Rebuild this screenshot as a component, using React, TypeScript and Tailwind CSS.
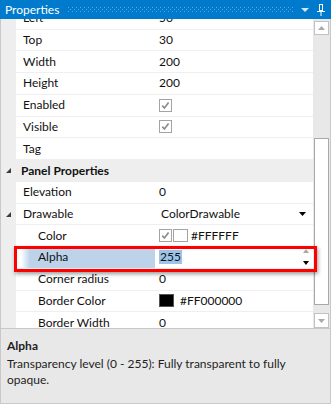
import React from 'react';
import clsx from 'clsx';

function Expander() {
  return (
    <svg width="5" height="5" viewBox="0 0 5 5">
      <polygon points="5,0 5,5 0,5" fill="#3c3c3c" />
    </svg>
  );
}

function CheckBox() {
  return (
    <span className="flex h-[13px] w-[13px] items-center justify-center border border-[#a3a3a3] bg-white">
      <svg width="9" height="9" viewBox="0 0 9 9">
        <path d="M1.3 4.6 L3.4 7 L7.6 1.4" fill="none" stroke="#8c8c8c" strokeWidth="1.7" />
      </svg>
    </span>
  );
}

function DownTri({ color = '#000', w = 7, h = 4 }: { color?: string; w?: number; h?: number }) {
  return (
    <svg width={w} height={h} viewBox={`0 0 ${w} ${h}`}>
      <polygon points={`0,0 ${w},0 ${w / 2},${h}`} fill={color} />
    </svg>
  );
}

function UpTri({ color = '#000', w = 7, h = 4 }: { color?: string; w?: number; h?: number }) {
  return (
    <svg width={w} height={h} viewBox={`0 0 ${w} ${h}`}>
      <polygon points={`0,${h} ${w},${h} ${w / 2},0`} fill={color} />
    </svg>
  );
}

interface RowProps {
  name: string;
  nested?: boolean;
  expand?: boolean;
  selected?: boolean;
  children?: React.ReactNode;
}

function Row({ name, nested, expand, selected, children }: RowProps) {
  return (
    <div className="flex h-[21.75px] shrink-0">
      <div className="flex w-[15px] items-center justify-center bg-[#eeeeee]">{expand && <Expander />}</div>
      <div className="flex flex-1 border-b border-[#efefef]">
        <div
          className={clsx(
            'flex h-full w-[139px] items-center',
            nested ? 'pl-[22px]' : 'pl-[7px]',
            selected && 'bg-[linear-gradient(to_right,#ffffff_5px,#bcd3ea_14px)]'
          )}
        >
          {name}
        </div>
        <div className="flex h-full flex-1 items-center pl-[4px]">{children}</div>
      </div>
    </div>
  );
}

function Header({ name }: { name: string }) {
  return (
    <div className="flex h-[21.75px] shrink-0 items-center bg-[#eeeeee]">
      <div className="flex w-[15px] items-center justify-center">
        <Expander />
      </div>
      <span className="pl-[5px] font-bold">{name}</span>
    </div>
  );
}

export default function App() {
  return (
    <div className="relative flex h-[404px] w-[331px] flex-col overflow-hidden bg-white font-['Lato',sans-serif] text-[12px] text-[#111]">
      {/* title bar */}
      <div className="flex h-[19px] shrink-0 items-center bg-[#007acc] pl-[5px] pr-[6px] text-white">
        <span className="leading-none">Properties</span>
        <svg className="ml-[9px] h-[5px] flex-1" height="5">
          <defs>
            <pattern id="dots" width="4" height="4" patternUnits="userSpaceOnUse">
              <rect x="0" y="0" width="1" height="1" fill="#5aa8df" />
              <rect x="2" y="2" width="1" height="1" fill="#5aa8df" />
            </pattern>
          </defs>
          <rect width="100%" height="5" fill="url(#dots)" />
        </svg>
        <span className="ml-[7px] flex items-center">
          <DownTri color="#d2e6f5" w={8} h={4} />
        </span>
        <svg className="ml-[8px]" width="8" height="12" viewBox="0 0 8 12">
          <rect x="2.5" y="0.5" width="3" height="6" fill="none" stroke="#fff" />
          <rect x="5" y="0" width="1" height="7" fill="#fff" />
          <rect x="0" y="7" width="8" height="1" fill="#fff" />
          <rect x="3.5" y="8" width="1" height="4" fill="#fff" />
        </svg>
      </div>

      {/* grid + scrollbar */}
      <div className="flex h-[309px] shrink-0 border-l border-r border-[#c8c8c8]">
        <div className="flex-1 overflow-hidden">
          <div className="-mt-[11.25px] flex flex-col">
            <Row name="Left">50</Row>
            <Row name="Top">30</Row>
            <Row name="Width">200</Row>
            <Row name="Height">200</Row>
            <Row name="Enabled">
              <CheckBox />
            </Row>
            <Row name="Visible">
              <CheckBox />
            </Row>
            <Row name="Tag" />
            <Header name="Panel Properties" />
            <Row name="Elevation">0</Row>
            <Row name="Drawable" expand>
              <span className="pl-[2px]">ColorDrawable</span>
              <span className="ml-auto mr-[7px] flex items-center">
                <DownTri />
              </span>
            </Row>
            <Row name="Color" nested>
              <CheckBox />
              <span className="ml-[1px] h-[13px] w-[15px] border border-[#a3a3a3] bg-white" />
              <span className="ml-[3px]">#FFFFFF</span>
            </Row>
            <Row name="Alpha" nested selected>
              <span className="bg-[#9cc4ea] px-[1px] leading-[14px]">255</span>
              <span className="ml-auto mr-[4px] flex flex-col items-center gap-[8px]">
                <UpTri color="#a8a8a8" w={6} h={4} />
                <DownTri w={6} h={4} />
              </span>
            </Row>
            <Row name="Corner radius" nested>
              0
            </Row>
            <Row name="Border Color" nested>
              <span className="h-[13px] w-[15px] border border-[#555] bg-black" />
              <span className="ml-[6px]">#FF000000</span>
            </Row>
            <Row name="Border Width" nested>
              0
            </Row>
          </div>
        </div>

        {/* scrollbar */}
        <div className="flex w-[17px] flex-col bg-[#e8e8e8] px-[1px] pt-[2px]">
          <div className="flex h-[14px] shrink-0 items-center justify-center border border-[#c2c2c2] bg-white">
            <UpTri color="#a9a9a9" w={7} h={4} />
          </div>
          <div className="h-[103px] shrink-0" />
          <div className="h-[167px] shrink-0 border border-[#a8a8a8] bg-white" />
          <div className="flex-1" />
          <div className="flex h-[15px] shrink-0 items-center justify-center border border-[#c2c2c2] bg-white">
            <DownTri color="#a9a9a9" w={7} h={4} />
          </div>
        </div>
      </div>

      {/* description */}
      <div className="flex flex-1 flex-col border border-[#c8c8c8] bg-[#e8e8e8] pl-[6px] pt-[9px] leading-[16px] text-[#1e1e1e]">
        <span className="font-bold">Alpha</span>
        <p className="mt-[2px]">
          Transparency level (0 - 255): Fully transparent to fully
          <br />
          opaque.
        </p>
      </div>

      {/* highlight annotation */}
      <div className="pointer-events-none absolute left-[14px] top-[246px] h-[26px] w-[303px] border-[3px] border-[#ff0000] shadow-[1px_2px_4px_rgba(0,0,0,0.4)]" />
    </div>
  );
}
